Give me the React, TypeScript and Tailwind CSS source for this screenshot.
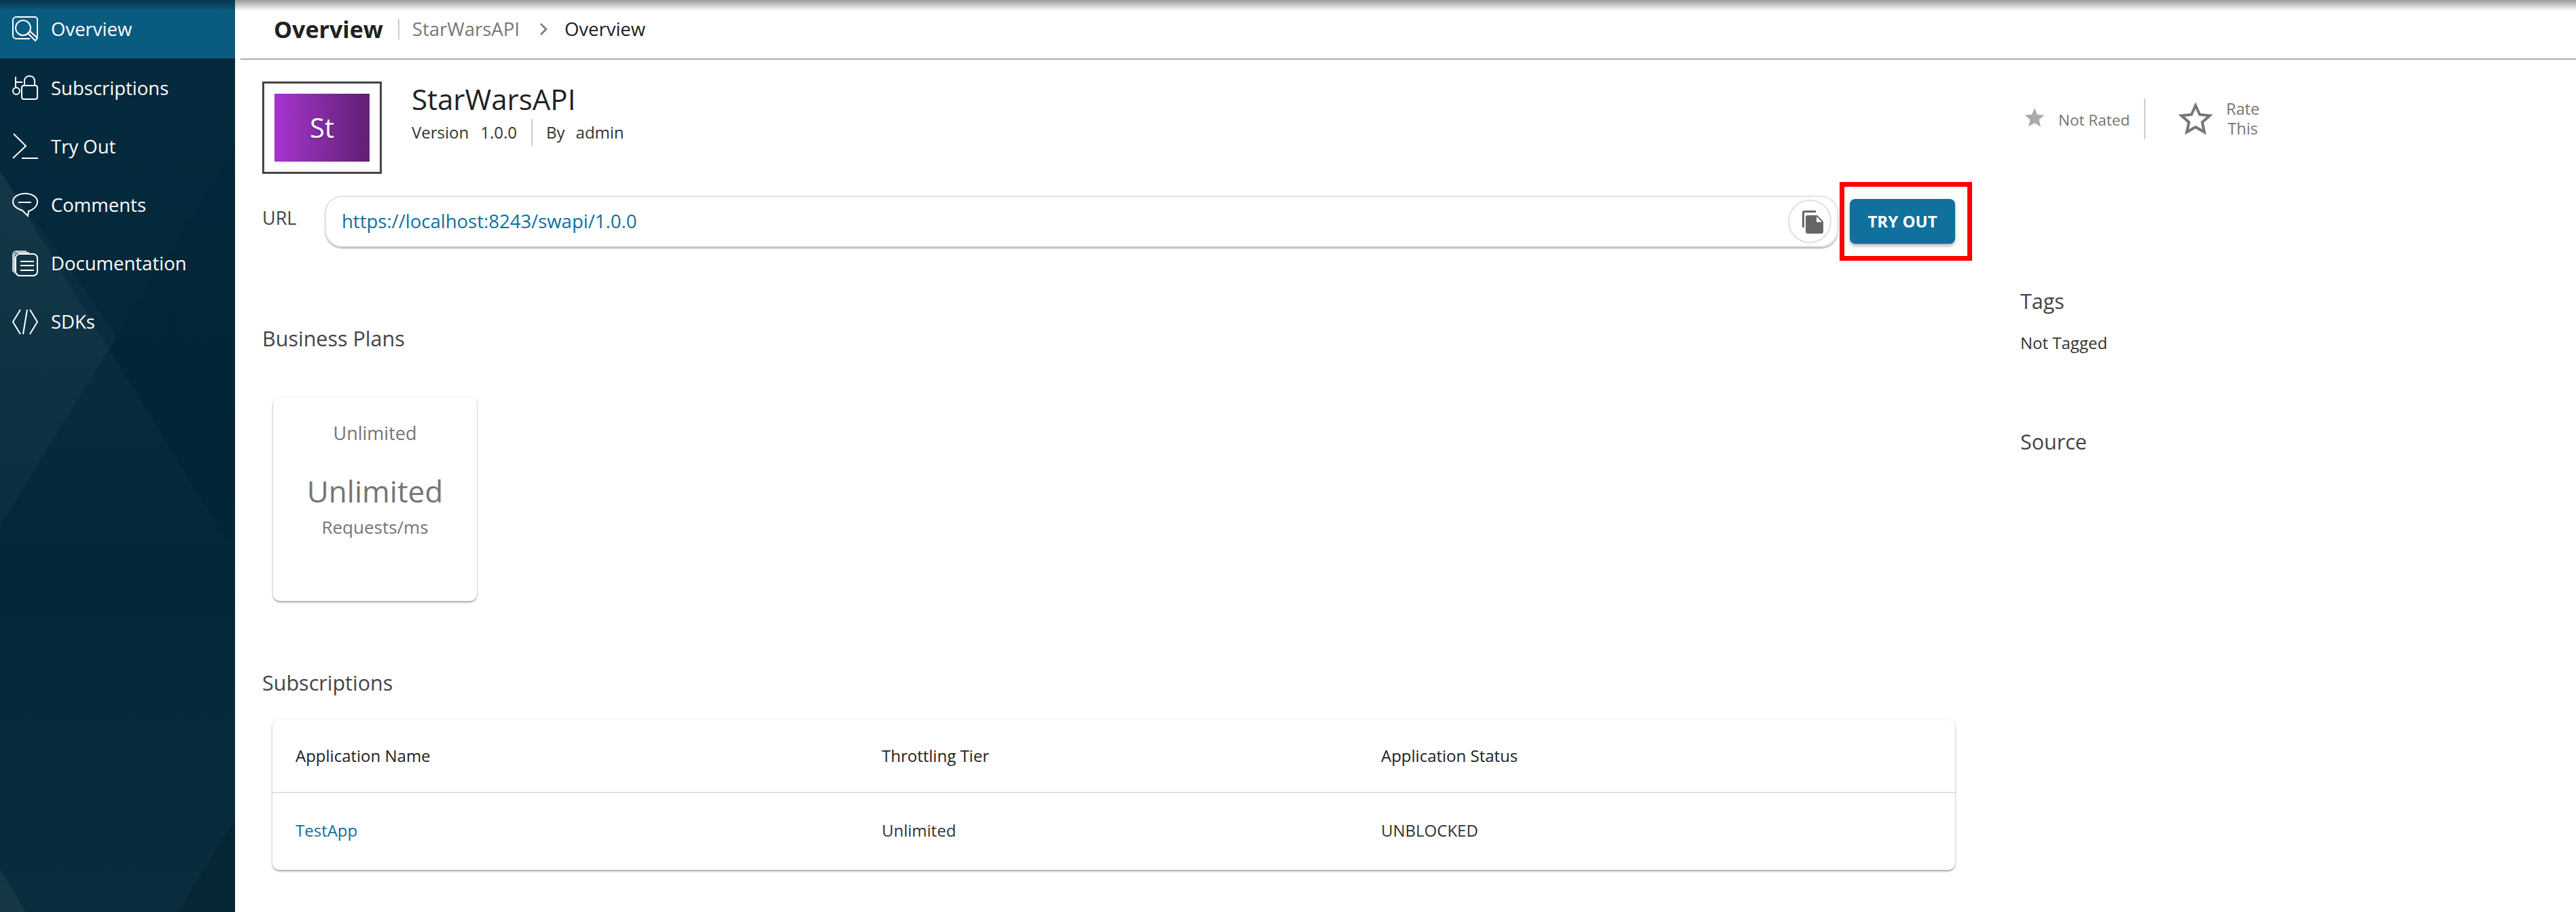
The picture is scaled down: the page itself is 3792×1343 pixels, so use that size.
const NAV_ITEMS = [
  { label: 'Overview', icon: <OverviewIcon /> },
  { label: 'Subscriptions', icon: <SubscriptionsIcon /> },
  { label: 'Try Out', icon: <TryOutIcon /> },
  { label: 'Comments', icon: <CommentsIcon /> },
  { label: 'Documentation', icon: <DocsIcon /> },
  { label: 'SDKs', icon: <SdksIcon /> },
];

function NavSvg({ children }: { children: React.ReactNode }) {
  return (
    <svg width="40" height="40" viewBox="0 0 40 40" fill="none" stroke="white" strokeWidth="2" className="shrink-0">
      {children}
    </svg>
  );
}

function OverviewIcon() {
  return (
    <NavSvg>
      <path d="M27 34H7a5 5 0 0 1-5-5V7a5 5 0 0 1 5-5h27a4 4 0 0 1 4 4v23a4 4 0 0 1-1 3" />
      <circle cx="17" cy="18" r="11" />
      <path d="M24 26l3-3 11 10-3 4z" />
    </NavSvg>
  );
}

function SubscriptionsIcon() {
  return (
    <NavSvg>
      <rect x="15" y="17" width="23" height="20" rx="3" />
      <path d="M19 17v-6a7 7 0 0 1 7-8h1a7 7 0 0 1 7 8v6" />
      <circle cx="7" cy="25" r="5" />
      <path d="M6 20V4M6 12h10" />
    </NavSvg>
  );
}

function TryOutIcon() {
  return (
    <NavSvg>
      <path d="M3 2l18 18L2 38M15 38h24" />
    </NavSvg>
  );
}

function CommentsIcon() {
  return (
    <NavSvg>
      <path d="M20 3C10 3 2 8 2 15c0 7 8 11 14 13l8 8 1-7c7-2 13-7 13-14 0-7-8-12-18-12z" />
      <path d="M10 16h19" />
    </NavSvg>
  );
}

function DocsIcon() {
  return (
    <NavSvg>
      <rect x="6" y="6" width="32" height="32" rx="6" />
      <path d="M13 17h20M13 23h20M13 30h20" />
      <path d="M22 2H7a5 5 0 0 0-5 5v25M26 4H9a5 5 0 0 0-5 5v25" strokeWidth="1.5" />
    </NavSvg>
  );
}

function SdksIcon() {
  return (
    <NavSvg>
      <path d="M13 2L2 20l11 18M23 2l-6 36M27 2l11 18-11 18" />
    </NavSvg>
  );
}

function SidebarPattern() {
  return (
    <svg className="absolute inset-0 h-full w-full" viewBox="0 0 346 1343" preserveAspectRatio="none">
      <defs>
        <linearGradient id="fadeA" x1="0" y1="0" x2="0" y2="1">
          <stop offset="0" stopColor="#ffffff" stopOpacity="0.045" />
          <stop offset="0.55" stopColor="#ffffff" stopOpacity="0.005" />
          <stop offset="1" stopColor="#ffffff" stopOpacity="0.025" />
        </linearGradient>
      </defs>
      <polygon points="0,252 346,817 346,1343 0,1343" fill="url(#fadeA)" />
      <polygon points="346,215 0,774 0,0 346,0" fill="#ffffff" fillOpacity="0.01" />
      <polygon points="0,252 0,774 172,495" fill="#b8d0c0" fillOpacity="0.035" />
      <polygon points="0,1280 38,1343 0,1343" fill="#ffffff" fillOpacity="0.05" />
      <polygon points="346,1205 262,1343 346,1343" fill="#000000" fillOpacity="0.12" />
    </svg>
  );
}

function Sidebar() {
  return (
    <aside className="relative w-[346px] shrink-0 overflow-hidden bg-gradient-to-b from-[#03283b] via-[#022638] to-[#032838]">
      <SidebarPattern />
      <nav className="relative flex flex-col">
        {NAV_ITEMS.map((item, i) => (
          <div
            key={item.label}
            className={`flex h-[86.2px] items-center gap-[18px] pl-[17px] text-[27.5px] text-white ${
              i === 0 ? 'bg-[#0a5b80]' : ''
            }`}
          >
            {item.icon}
            <span>{item.label}</span>
          </div>
        ))}
      </nav>
    </aside>
  );
}

function Header() {
  return (
    <header className="ml-2 flex h-[88px] items-center border-b-2 border-[#aaaaaa] pl-[49px]">
      <h1 className="text-[34px] font-bold text-[#212121]">Overview</h1>
      <span className="ml-[22px] h-[30px] w-[2px] bg-[#cccccc]" />
      <span className="ml-[19px] text-[27.5px] text-[#777777]">StarWarsAPI</span>
      <svg width="16" height="24" viewBox="0 0 16 24" fill="none" stroke="#777777" strokeWidth="2.5" className="ml-[27px]">
        <path d="M4 4l8 8-8 8" />
      </svg>
      <span className="ml-[23px] text-[27.5px] text-[#212121]">Overview</span>
    </header>
  );
}

function ApiInfo() {
  return (
    <div className="flex h-[136px]">
      <div className="flex h-[136px] w-[176px] shrink-0 items-center justify-center border-[3px] border-[#444444]">
        <div className="flex h-[100px] w-[140px] items-center justify-center bg-gradient-to-r from-[#a835d0] to-[#5f2072] text-[40px] text-white [text-shadow:0_1px_2px_rgba(0,0,0,0.3)]">
          St
        </div>
      </div>
      <div className="ml-[44px]">
        <div className="mt-[-3px] text-[42px] leading-[58px] text-[#212121]">StarWarsAPI</div>
        <div className="flex h-[40px] items-center text-[24px] text-[#333333]">
          <span>Version</span>
          <span className="ml-[17px]">1.0.0</span>
          <span className="ml-[21px] h-[40px] w-[2px] bg-[#cccccc]" />
          <span className="ml-[20px]">By</span>
          <span className="ml-[16px]">admin</span>
        </div>
      </div>
    </div>
  );
}

function UrlRow() {
  return (
    <div className="mt-[12px] flex h-[116px] items-center">
      <span className="w-[92px] shrink-0 pb-[10px] text-[27px] text-[#444444]">URL</span>
      <div className="flex h-[76px] w-[2228px] shrink-0 items-center justify-between rounded-[26px] border-2 border-[#e4e4e4] pl-[23px] pr-[8px] shadow-[0_2px_2px_rgba(0,0,0,0.3)]">
        <span className="text-[27.5px] text-[#0f6f9e]">https://localhost:8243/swapi/1.0.0</span>
        <span className="flex h-[64px] w-[64px] items-center justify-center rounded-full border-2 border-[#e0e0e0]">
          <svg width="34" height="36" viewBox="0 0 34 36" fill="#666666" className="ml-[8px]">
            <path d="M22 2H5a3 3 0 0 0-3 3v22h3V5h17z" />
            <path d="M10 9h14l9 9v15a3 3 0 0 1-3 3H10a3 3 0 0 1-3-3V12a3 3 0 0 1 3-3z" />
            <path d="M23 11l8 8h-8z" fill="#ffffff" />
          </svg>
        </span>
      </div>
      <div className="ml-[2px] flex h-[116px] w-[195px] shrink-0 items-center border-[7px] border-[#ff0000] pl-[8px]">
        <button className="h-[66px] w-[155px] rounded-[8px] bg-[#10709e] text-[24px] font-bold text-white shadow-[0_3px_5px_rgba(0,0,0,0.3)]">
          TRY OUT
        </button>
      </div>
    </div>
  );
}

function PlanCard() {
  return (
    <div className="ml-[16px] mt-[67px] flex h-[300px] w-[300px] flex-col items-center rounded-[10px] bg-white pt-[35px] text-[#757575] shadow-[0_2px_3px_rgba(0,0,0,0.35),0_0_3px_rgba(0,0,0,0.08)]">
      <div className="text-[27px] leading-[36px]">Unlimited</div>
      <div className="mt-[39px] text-[44px] leading-[56px]">Unlimited</div>
      <div className="mt-[7px] text-[26px] leading-[36px]">Requests/ms</div>
    </div>
  );
}

function SubscriptionsTable() {
  return (
    <div className="ml-[15px] mt-[35px] rounded-[10px] bg-white text-[24px] text-[#333333] shadow-[0_2px_3px_rgba(0,0,0,0.35),0_0_3px_rgba(0,0,0,0.08)]">
      <div className="grid h-[108px] grid-cols-[863px_735px_1fr] items-center border-b-2 border-[#e0e0e0] pl-[34px] text-[#212121]">
        <span>Application Name</span>
        <span>Throttling Tier</span>
        <span>Application Status</span>
      </div>
      <div className="grid h-[113px] grid-cols-[863px_735px_1fr] items-center pb-[3px] pl-[34px]">
        <span className="text-[#0f6f9e]">TestApp</span>
        <span>Unlimited</span>
        <span>UNBLOCKED</span>
      </div>
    </div>
  );
}

function RatingColumn() {
  return (
    <div className="ml-[96px] w-[400px] shrink-0">
      <div className="mt-[25px] flex h-[60px] items-center text-[#757575]">
        <svg width="32" height="30" viewBox="0 0 24 24" fill="#aaaaaa" className="mb-[4px] ml-[5px]">
          <path d="M12 1l3.2 7.6 8.3.6-6.3 5.4 2 8.1L12 18.4l-7.200 4.300 2-8.100L.5 9.200l8.300-.6z" />
        </svg>
        <span className="ml-[19px] w-[104px] whitespace-nowrap pt-[3px] text-[22.5px]">Not Rated</span>
        <span className="ml-[22px] h-[60px] w-[2px] bg-[#cccccc]" />
        <svg width="52" height="50" viewBox="0 0 24 24" fill="none" stroke="#757575" strokeWidth="1.900" className="ml-[48px]">
          <path d="M12 2.500l2.900 6.500 7.100.7-5.300 4.700 1.500 7-6.200-3.600-6.200 3.600 1.500-7L2 9.700l7.100-.7z" />
        </svg>
        <div className="ml-[19px] text-center text-[23.5px] leading-[29px]">
          <div>Rate</div>
          <div>This</div>
        </div>
      </div>
      <h2 className="mt-[218px] text-[30.5px] leading-[40px] text-[#444444]">Tags</h2>
      <div className="mt-[26px] text-[24px] leading-[32px] text-[#333333]">Not Tagged</div>
      <h2 className="mt-[109px] text-[30.5px] leading-[40px] text-[#444444]">Source</h2>
    </div>
  );
}

export default function App() {
  return (
    <div className="relative flex h-[1343px] w-full overflow-hidden bg-white font-['Open_Sans',sans-serif]">
      <Sidebar />
      <main className="min-w-0 flex-1">
        <Header />
        <div className="flex pl-[40px] pt-[32px]">
          <div className="w-[2492px] shrink-0">
            <ApiInfo />
            <UrlRow />
            <h2 className="mt-[94px] text-[30.5px] leading-[40px] text-[#444444]">Business Plans</h2>
            <PlanCard />
            <h2 className="mt-[100px] text-[30.5px] leading-[40px] text-[#444444]">Subscriptions</h2>
            <SubscriptionsTable />
          </div>
          <RatingColumn />
        </div>
      </main>
      <div className="absolute inset-x-0 top-0 h-[16px] bg-gradient-to-b from-black/40 to-transparent" />
    </div>
  );
}
